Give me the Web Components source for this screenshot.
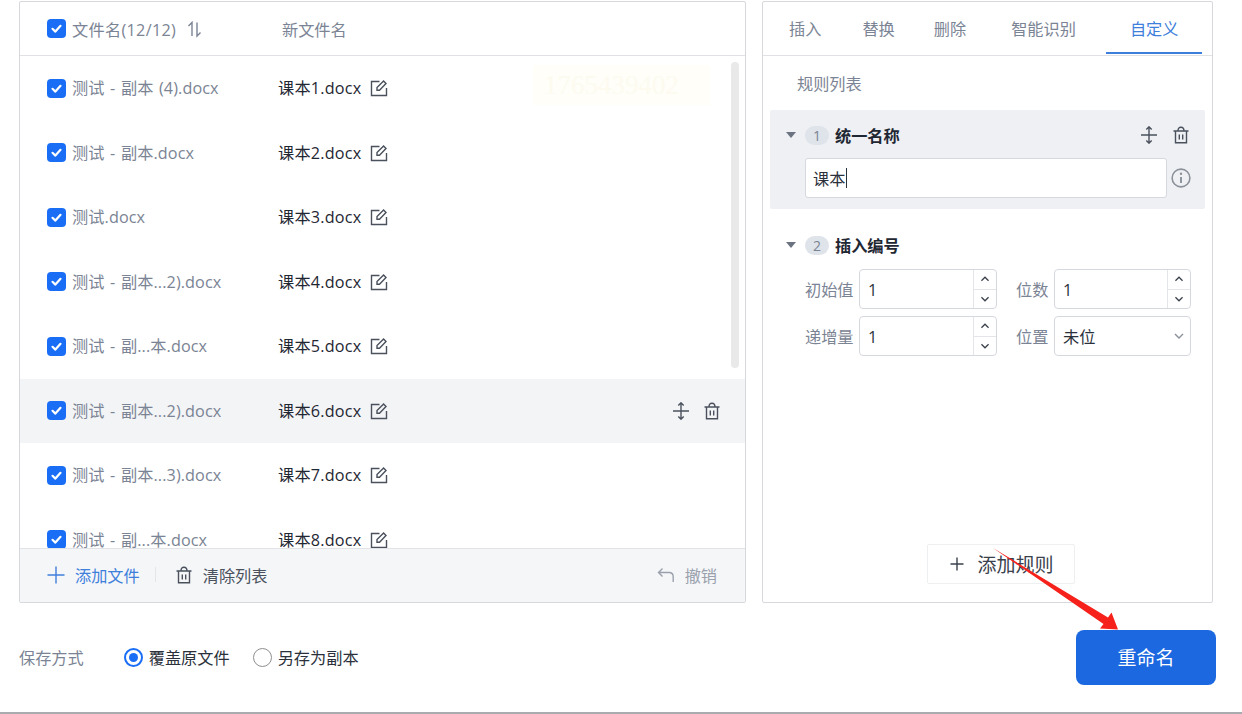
<!DOCTYPE html>
<html lang="zh"><head><meta charset="utf-8"><title>批量重命名</title>
<style>
html,body{margin:0;padding:0;background:#fff;font:16.2px "Open Sans","Noto Sans CJK SC","Noto Sans",sans-serif;overflow:hidden}
</style></head><body>
<rename-app>
  <file-panel slot="left">
    <file-row name="测试 - 副本 (4).docx" new="课本1.docx"></file-row>
    <file-row name="测试 - 副本.docx" new="课本2.docx"></file-row>
    <file-row name="测试.docx" new="课本3.docx"></file-row>
    <file-row name="测试 - 副本...2).docx" new="课本4.docx"></file-row>
    <file-row name="测试 - 副...本.docx" new="课本5.docx"></file-row>
    <file-row name="测试 - 副本...2).docx" new="课本6.docx" active></file-row>
    <file-row name="测试 - 副本...3).docx" new="课本7.docx"></file-row>
    <file-row name="测试 - 副...本.docx" new="课本8.docx"></file-row>
  </file-panel>
  <rule-panel slot="right">
    <rule-card num="1" title="统一名称" active>
      <div style="display:flex;align-items:center">
        <text-field value="课本"></text-field>
        <ui-icon name="info" size="20" style="color:#8b909a;margin-left:4px"></ui-icon>
      </div>
    </rule-card>
    <rule-card num="2" title="插入编号">
      <number-grid></number-grid>
    </rule-card>
  </rule-panel>
</rename-app>
<script>
const ICONS={
 edit:'<path d="M9.5 2.5H1.5v14h15V9"/><path d="M7 11.2V8.6L13.6 2 16 4.4 9.5 11.2z"/>',
 trash:'<path d="M1.5 5h15M3.5 5v11.8h11V5M6 5C6 2.4 7 1.2 9 1.2S12 2.4 12 5M7.3 8.5v5M10.7 8.5v5"/>',
 move:'<path d="M1 9h16M9 .8v16.4M6.3 3.5 9 .8l2.7 2.7M6.3 14.5 9 17.2l2.7-2.7"/>',
 sort:'<path d="M6 16V2.5L2.5 6M11 2.5V16l3.5-3.5"/>',
 plus:'<path d="M9 .5v17M.5 9h17"/>',
 plusdark:'<path d="M9 2.5v13M2.5 9h13"/>',
 undo:'<path d="M5.5 2.5 1.5 6.5l4 4M1.5 6.5H12c2.6 0 4.2 1.6 4.2 4.2V16"/>',
 info:'<circle cx="9" cy="9" r="8"/><path d="M9 8v5.5" stroke-width="1.7"/><circle cx="9" cy="5.2" r=".6" stroke-width="1"/>',
 up:'<path d="M5 11 9 7l4 4"/>',
 down:'<path d="M5 7l4 4 4-4"/>'
};
function def(name,html,init){
  const t=document.createElement('template');t.innerHTML=html;
  customElements.define(name,class extends HTMLElement{
    connectedCallback(){ if(this.shadowRoot)return; const r=this.attachShadow({mode:'open'}); r.appendChild(t.content.cloneNode(true)); init&&init.call(this,r); }
  });
}
def('ui-icon','<style>:host{display:inline-flex;flex:none;line-height:0}svg{fill:none;stroke:currentColor;stroke-width:1.4}</style><svg viewBox="0 0 18 18"></svg>',function(r){
  const s=r.querySelector('svg'),z=this.getAttribute('size')||18;s.setAttribute('width',z);s.setAttribute('height',z);
  s.innerHTML=ICONS[this.getAttribute('name')];
});
def('check-box',`<style>:host{display:inline-flex;width:19px;height:19px;border-radius:4px;background:#1a6ef5;align-items:center;justify-content:center;flex:none}</style>
<svg width="13" height="13" viewBox="0 0 13 13" fill="none" stroke="#fff" stroke-width="2.2" stroke-linecap="round" stroke-linejoin="round"><path d="M2.5 6.8 5.4 9.6 10.5 3.8"/></svg>`);
def('rename-app',`<style>
:host{display:flex;flex-direction:column;width:1242px;height:714px;box-sizing:border-box;position:relative;border-bottom:2px solid #a9abae;background:#fff}
.main{display:flex;gap:16px;padding:1px 0 0 19px}
.save{display:flex;align-items:center;padding:27px 26px 0 19px;height:55px;color:#2b313b}
.tx{margin-bottom:2px}
.lbl{color:#7b8494;margin-right:40px}
.radio{width:19px;height:19px;border-radius:50%;box-sizing:border-box;border:1.5px solid #8e8e8e;margin-right:6px;flex:none}
.on{border:2px solid #1a6ef5;display:flex;align-items:center;justify-content:center;margin-left:0}
.on::after{content:"";width:9px;height:9px;border-radius:50%;background:#1a6ef5}
.t1{margin-right:23px}
.go{margin-left:auto;width:140px;height:55px;box-sizing:border-box;padding-bottom:2px;border-radius:8px;background:#1c68e0;color:#fff;font-size:19px;display:flex;align-items:center;justify-content:center}
svg.arrow{position:absolute;left:0;top:0;pointer-events:none}
</style>
<div class="main"><slot name="left"></slot><slot name="right"></slot></div>
<div class="save"><span class="lbl tx">保存方式</span><span class="radio on"></span><span class="t1 tx">覆盖原文件</span><span class="radio"></span><span class="tx">另存为副本</span><div class="go">重命名</div></div>
<svg class="arrow" width="1242" height="714"><polygon points="993,548 1108,617.5 1111.5,612.5 1118,629.5 1100,628.5 1103.5,624" fill="#f6211b"/></svg>`);
def('file-panel',`<style>
:host{display:flex;flex-direction:column;width:727px;height:602px;box-sizing:border-box;border:1px solid #d6d8dc;border-radius:2px;color:#7b8494;background:#fff;position:relative;overflow:hidden}
.head{height:53px;flex:none;border-bottom:1px solid #dfe1e5;display:flex;align-items:center;padding-left:27px;box-sizing:content-box}
.head span.n{margin-left:6px;letter-spacing:.3px}
.head ui-icon{margin-left:10px;color:#7b8494}
.head .new{position:absolute;left:262px}
.list{flex:1;overflow:hidden;min-height:0}
.foot{flex:none;height:54px;box-sizing:border-box;padding-bottom:2px;border-top:1px solid #e1e3e7;background:#f5f6f8;display:flex;align-items:center;padding-left:27px;padding-right:28px;color:#4a515d}
.add{color:#3f7fdc;display:flex;align-items:center;gap:10px}
.sep{width:1px;height:15px;background:#e3e5e9;margin:0 19px 0 15px}
.clr{display:flex;align-items:center;gap:10px}
.und{margin-left:auto;display:flex;align-items:center;gap:10px;color:#9aa1ad}
.bar{position:absolute;left:711px;top:60px;width:8px;height:306px;border-radius:4px;background:#e9e9ea}
.mark{position:absolute;left:513px;top:63px;width:177px;height:40px;background:#fffef8;color:#fdfbf0;font:27px "Liberation Serif",serif;display:flex;align-items:center;padding-left:11px;box-sizing:border-box}
</style>
<div class="head"><check-box></check-box><span class="n">文件名(12/12)</span><ui-icon name="sort"></ui-icon><span class="new">新文件名</span></div>
<div class="list"><slot></slot></div>
<div class="foot"><span class="add"><ui-icon name="plus"></ui-icon>添加文件</span><span class="sep"></span><span class="clr"><ui-icon name="trash"></ui-icon>清除列表</span><span class="und"><ui-icon name="undo"></ui-icon>撤销</span></div>
<div class="mark">1765439402</div><div class="bar"></div>`);
def('file-row',`<style>
:host{display:flex;align-items:center;height:64.5px;padding-left:27px;color:#7b8494}
:host([active]){background:#f3f4f6}
.name{margin-left:6px;width:206px;white-space:nowrap;word-spacing:1.2px;letter-spacing:.1px;margin-bottom:2px}
.new{color:#1f2733;letter-spacing:.2px;margin-bottom:2px}
.e{margin-left:9px;color:#4a515d}
.ops{display:none;margin-left:auto;margin-right:24px;gap:13px;color:#4a515d}
:host([active]) .ops{display:flex}
</style><check-box></check-box><span class="name"></span><span class="new"></span><ui-icon class="e" name="edit"></ui-icon>
<span class="ops"><ui-icon name="move"></ui-icon><ui-icon name="trash"></ui-icon></span>`,function(r){
  r.querySelector('.name').textContent=this.getAttribute('name');r.querySelector('.new').textContent=this.getAttribute('new');
});
def('rule-panel',`<style>
:host{display:flex;flex-direction:column;width:451px;height:602px;box-sizing:border-box;border:1px solid #d6d8dc;border-radius:2px;background:#fff;color:#7b8494}
.tabs{height:53px;flex:none;border-bottom:1px solid #dfe1e5;display:flex;align-items:stretch;padding-left:26px;box-sizing:content-box;line-height:54px}
.tabs span{white-space:nowrap}
.cur{color:#3f7fdc;position:relative}
.cur::after{content:"";position:absolute;left:-24px;right:-24px;bottom:1px;height:2.4px;background:#3f7fdc}
.title{padding:16px 0 0 34px;height:38px;box-sizing:content-box;line-height:24px;flex:none}
.cards{padding:0 7px;display:flex;flex-direction:column;gap:11px;flex:1}
.add{align-self:center;margin:0 0 18px 27px;width:148px;height:40px;box-sizing:border-box;border:1px solid #eeeff1;border-radius:2px;display:flex;align-items:center;justify-content:center;gap:11px;color:#3a414c;font-size:19px}
</style>
<div class="tabs"><span>插入</span><span style="margin-left:41px">替换</span><span style="margin-left:39px">删除</span><span style="margin-left:45px">智能识别</span><span class="cur" style="margin-left:54px">自定义</span></div>
<div class="title">规则列表</div>
<div class="cards"><slot></slot></div>
<div class="add"><ui-icon name="plusdark"></ui-icon>添加规则</div>`);
def('rule-card',`<style>
:host{display:block;box-sizing:border-box;padding:13px 14px 11px 16px;border-radius:2px}
:host([active]){background:#eef0f3}
.h{display:flex;align-items:center;height:24px;margin-bottom:11px}
.car{width:0;height:0;border:5px solid transparent;border-top:6px solid #6b7380;border-bottom:0;margin-right:9px}
.b{width:24px;height:19px;border-radius:10px;background:#dfe3ea;color:#7b8494;font-size:14px;line-height:19px;text-align:center;margin-right:6px}
.t{font-weight:700;color:#1f2733}
.ops{display:none;margin-left:auto;margin-right:1px;gap:14px;color:#4a515d}
:host([active]) .ops{display:flex}
.body{padding-left:19px}
</style><div class="h"><span class="car"></span><span class="b"></span><span class="t"></span><span class="ops"><ui-icon name="move"></ui-icon><ui-icon name="trash"></ui-icon></span></div><div class="body"><slot></slot></div>`,function(r){
  r.querySelector('.b').textContent=this.getAttribute('num');r.querySelector('.t').textContent=this.getAttribute('title');
  this.removeAttribute('title');
});
def('text-field',`<style>
:host{flex:1;display:flex;align-items:center;height:40px;box-sizing:border-box;border:1px solid #d5d8de;border-radius:3px;background:#fff;color:#2b313b;padding-left:7px}
i{display:inline-block;width:1px;height:20px;background:#2b313b;margin-left:1px}
</style><span></span><i></i>`,function(r){r.querySelector('span').textContent=this.getAttribute('value')});
def('number-field',`<style>
:host{display:flex;box-sizing:border-box;width:100%;height:40px;border:1px solid #d5d8de;border-radius:4px;background:#fff;color:#2b313b;flex:none}
.v{flex:1;padding-left:8px;line-height:40px}
.s{width:22px;border-left:1px solid #e3e5e9;display:flex;flex-direction:column}
.s ui-icon{flex:1;align-items:center;justify-content:center;color:#39404b}
.s ui-icon+ui-icon{border-top:1px solid #e3e5e9}
</style><span class="v">1</span><span class="s"><ui-icon name="up" size="16"></ui-icon><ui-icon name="down" size="16"></ui-icon></span>`);
def('select-field',`<style>
:host{display:flex;align-items:center;box-sizing:border-box;width:100%;height:40px;border:1px solid #d5d8de;border-radius:4px;background:#fff;color:#2b313b;padding-left:8px;flex:none}
ui-icon{margin-left:auto;margin-right:2px;color:#8b909a}
</style>未位<ui-icon name="down" size="18"></ui-icon>`);
def('number-grid',`<style>
:host{display:grid;grid-template-columns:49px 138px 47px 137px;gap:7px 5px;margin:0 0 0 -19px;padding:1px 0 0 19px;align-items:center;justify-content:start;color:#7b8494}
span{white-space:nowrap}
.r{margin-left:14px}
</style>
<span>初始值</span><number-field></number-field><span class="r">位数</span><number-field></number-field>
<span>递增量</span><number-field></number-field><span class="r">位置</span><select-field></select-field>`);
</script>
</body></html>
